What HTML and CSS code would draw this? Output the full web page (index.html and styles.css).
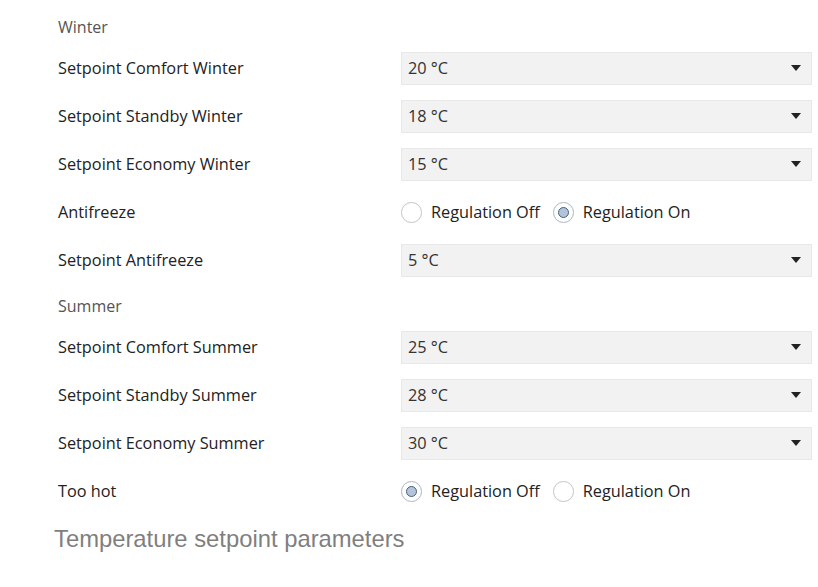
FILE: index.html
```html
<!DOCTYPE html>
<html>
<head>
<meta charset="utf-8">
<link rel="stylesheet" href="styles.css">
</head>
<body>
<div class="panel">
  <div class="section">Winter</div>
  <div class="row"><div class="label">Setpoint Comfort Winter</div><div class="select"><span>20 °C</span><span class="arrow"></span></div></div>
  <div class="row"><div class="label">Setpoint Standby Winter</div><div class="select"><span>18 °C</span><span class="arrow"></span></div></div>
  <div class="row"><div class="label">Setpoint Economy Winter</div><div class="select"><span>15 °C</span><span class="arrow"></span></div></div>
  <div class="row"><div class="label">Antifreeze</div><div class="radios"><label class="radio"><span class="dot"></span>Regulation Off</label><label class="radio"><span class="dot on"></span>Regulation On</label></div></div>
  <div class="row"><div class="label">Setpoint Antifreeze</div><div class="select"><span>5 °C</span><span class="arrow"></span></div></div>
  <div class="section">Summer</div>
  <div class="row"><div class="label">Setpoint Comfort Summer</div><div class="select"><span>25 °C</span><span class="arrow"></span></div></div>
  <div class="row"><div class="label">Setpoint Standby Summer</div><div class="select"><span>28 °C</span><span class="arrow"></span></div></div>
  <div class="row"><div class="label">Setpoint Economy Summer</div><div class="select"><span>30 °C</span><span class="arrow"></span></div></div>
  <div class="row"><div class="label">Too hot</div><div class="radios"><label class="radio"><span class="dot on"></span>Regulation Off</label><label class="radio"><span class="dot"></span>Regulation On</label></div></div>
</div>
<div class="caption">Temperature setpoint parameters</div>
</body>
</html>
```
FILE: styles.css
```css
html, body { margin: 0; padding: 0; background: #fff; }
body { width: 818px; height: 587px; overflow: hidden; font-family: "Open Sans", "Noto Sans", sans-serif; }
.panel { padding: 5px 6px 0 58px; }
.section { height: 39px; box-sizing: border-box; padding-top: 12px; font-size: 16px; color: #555; line-height: 20px; }
.row { height: 48px; display: grid; grid-template-columns: 343px 1fr; align-items: center; }
.label { font-size: 16.3px; color: #222; }
.select { height: 33px; box-sizing: border-box; background: #f2f2f2; border: 1px solid #e8e8e8; display: flex; align-items: center; justify-content: space-between; padding: 0 10px 0 6px; font-size: 16.3px; color: #333; }
.arrow { width: 0; height: 0; border-left: 5.5px solid transparent; border-right: 5.5px solid transparent; border-top: 6px solid #222; }
.radios { display: flex; gap: 13px; font-size: 16.3px; color: #222; padding-left: 0; }
.radio { display: flex; align-items: center; gap: 9px; }
.dot { width: 21px; height: 21px; box-sizing: border-box; border: 1px solid #c8c8c8; border-radius: 50%; background: #fff; position: relative; box-shadow: 0 0 1px rgba(0,0,0,0.08); }
.dot.on { border-color: #b0bac5; }
.dot.on::after { content: ""; position: absolute; left: 4px; top: 4px; width: 11px; height: 11px; box-sizing: border-box; border-radius: 50%; background: #b3c4d8; border: 1.5px solid #46617f; }
.caption { margin: 10px 0 0 54px; font-family: "Liberation Sans", Arial, sans-serif; font-size: 23.8px; color: #7f7f7f; }
```
